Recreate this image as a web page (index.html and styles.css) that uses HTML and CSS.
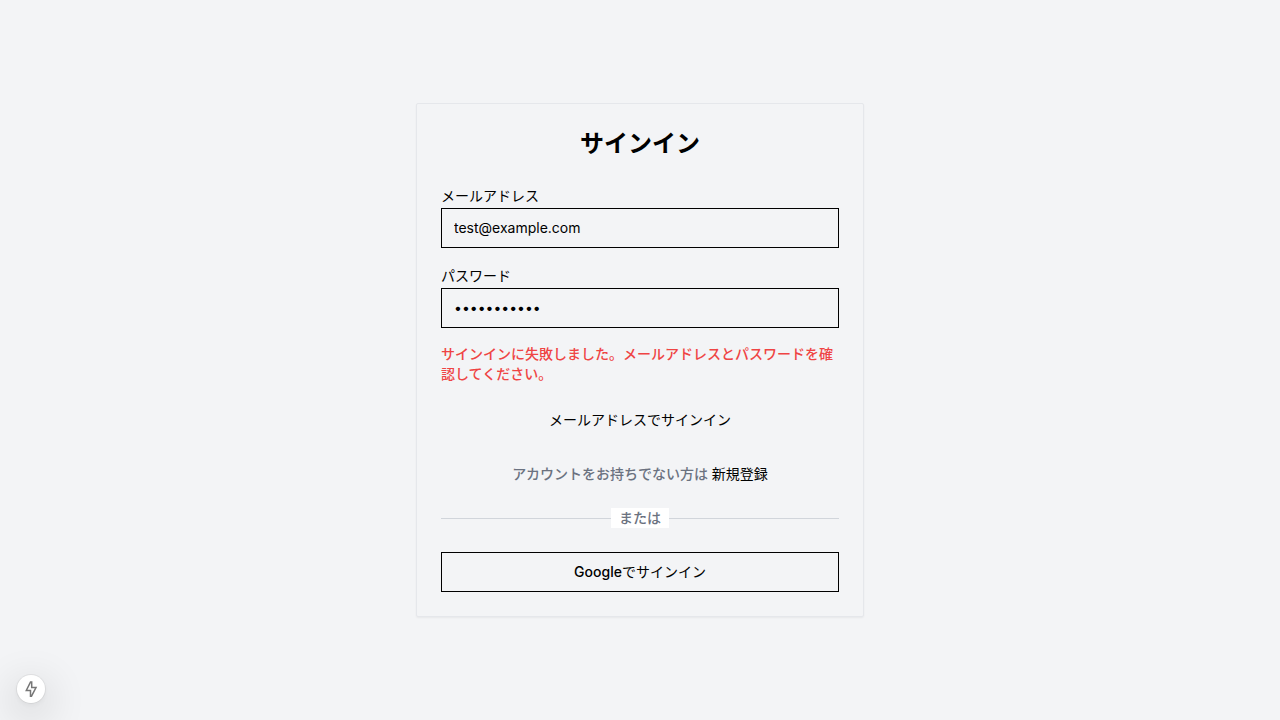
FILE: index.html
```html
<!DOCTYPE html>
<html lang="ja">
<head>
<meta charset="utf-8">
<meta name="viewport" content="width=device-width, initial-scale=1">
<title>サインイン</title>
<link rel="stylesheet" href="styles.css">
</head>
<body>
<main class="page">
  <section class="card">
    <h1 class="title">サインイン</h1>
    <form class="form">
      <div class="field">
        <label class="label" for="email">メールアドレス</label>
        <input class="input" id="email" type="email" value="test@example.com">
      </div>
      <div class="field">
        <label class="label" for="password">パスワード</label>
        <input class="input" id="password" type="password" value="password123">
      </div>
      <p class="error" role="alert">サインインに失敗しました。メールアドレスとパスワードを確認してください。</p>
      <button class="button" type="submit">メールアドレスでサインイン</button>
    </form>
    <p class="signup">アカウントをお持ちでない方は <a class="link" href="#">新規登録</a></p>
    <div class="divider"><span class="divider-text">または</span></div>
    <button class="button button-outline" type="button"><span class="brand">Google</span>でサインイン</button>
  </section>
</main>
<button class="dev" type="button" aria-label="Dev tools">
  <svg class="bolt" viewBox="0 0 16 16" fill="none" stroke="currentColor" stroke-width="1.5"><path d="M7.6.9 3.3 9.5H7.5V15.2H8.5L13 6.6H8.7V.9z"/></svg>
</button>
</body>
</html>
```

FILE: styles.css
```css
* { box-sizing: border-box; }
body {
  margin: 0;
  background: #f3f4f6;
  color: #000;
  font: 500 14px/20px Inter, "Noto Sans CJK JP", sans-serif;
}
.page {
  min-height: 100vh;
  display: flex;
  align-items: center;
  justify-content: center;
}
.card {
  width: 100%;
  max-width: 448px;
  padding: 24px;
  border: 1px solid #e5e7eb;
  border-radius: 2px;
  box-shadow: 0 1px 2px rgba(0, 0, 0, 0.05);
}
.title {
  margin: 0 0 24px;
  font-size: 24px;
  line-height: 32px;
  font-weight: 700;
  text-align: center;
}
.form { display: flex; flex-direction: column; gap: 16px; }
.field { display: flex; flex-direction: column; }
.label { line-height: 24px; font-weight: 400; }
.input {
  width: 100%;
  height: 40px;
  padding: 8px 12px 9px;
  border: 1px solid #000;
  border-radius: 0;
  background: transparent;
  color: inherit;
  font: inherit;
  font-weight: 400;
}
.error { margin: 0; color: #ef4444; }
.button {
  width: 100%;
  height: 40px;
  padding: 8px 16px;
  border: 0;
  background: transparent;
  color: inherit;
  font: inherit;
  font-weight: 400;
}
.button-outline { border: 1px solid #000; }
.brand { font-weight: 500; }
.signup { margin: 24px 0; color: #6b7280; text-align: center; }
.link { color: #000; font-weight: 400; text-decoration: none; }
.divider { display: flex; align-items: center; margin-bottom: 24px; color: #6b7280; }
.divider::before, .divider::after { content: ""; flex: 1; height: 1px; background: #d1d5db; }
.divider-text { padding: 0 8px; background: #fff; }
.dev {
  position: fixed;
  left: 17px;
  bottom: 17px;
  width: 28px;
  height: 28px;
  padding: 6px;
  border: 0;
  border-radius: 50%;
  background: #fff;
  color: #777;
  box-shadow: 0 0 0 1px rgba(0, 0, 0, 0.06), 0 2px 6px rgba(0, 0, 0, 0.06), 0 11px 40px 5px rgba(0, 0, 0, 0.14);
}
.bolt { display: block; width: 16px; height: 16px; }
```
